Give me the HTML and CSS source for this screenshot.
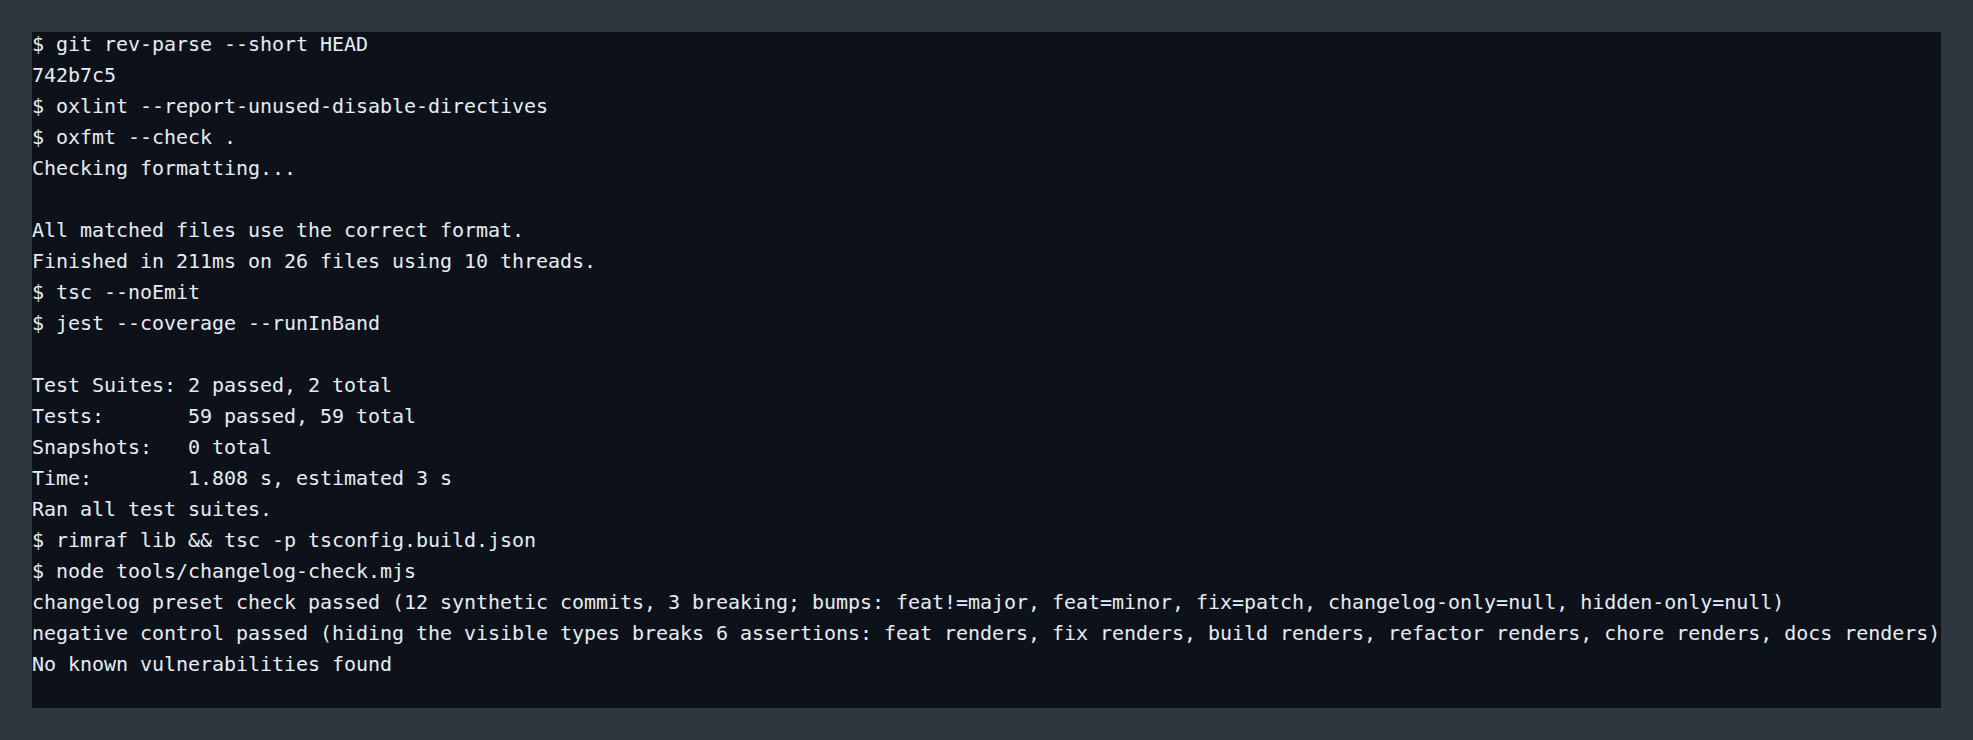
FILE: index.html
```html
<!DOCTYPE html>
<html>
<head>
<meta charset="utf-8">
<link rel="stylesheet" href="styles.css">
</head>
<body>
<main class="page">
<div class="terminal">
<pre class="output">$ git rev-parse --short HEAD
742b7c5
$ oxlint --report-unused-disable-directives
$ oxfmt --check .
Checking formatting...

All matched files use the correct format.
Finished in 211ms on 26 files using 10 threads.
$ tsc --noEmit
$ jest --coverage --runInBand

Test Suites: 2 passed, 2 total
Tests:       59 passed, 59 total
Snapshots:   0 total
Time:        1.808 s, estimated 3 s
Ran all test suites.
$ rimraf lib &amp;&amp; tsc -p tsconfig.build.json
$ node tools/changelog-check.mjs
changelog preset check passed (12 synthetic commits, 3 breaking; bumps: feat!=major, feat=minor, fix=patch, changelog-only=null, hidden-only=null)
negative control passed (hiding the visible types breaks 6 assertions: feat renders, fix renders, build renders, refactor renders, chore renders, docs renders)
No known vulnerabilities found
</pre>
</div>
</main>
</body>
</html>
```
FILE: styles.css
```css
html, body {
  margin: 0;
  padding: 0;
  background: #2f363e;
}
.page {
  box-sizing: border-box;
  height: 740px;
  padding: 32px;
  display: flex;
}
.terminal {
  flex: 1;
  background: #0d111a;
  overflow: hidden;
}
.output {
  margin: -3px 0 0 0;
  color: #e6edf3;
  font-family: "DejaVu Sans Mono", monospace;
  font-size: 20px;
  letter-spacing: -0.04px;
  line-height: 31px;
  white-space: pre;
}
```
